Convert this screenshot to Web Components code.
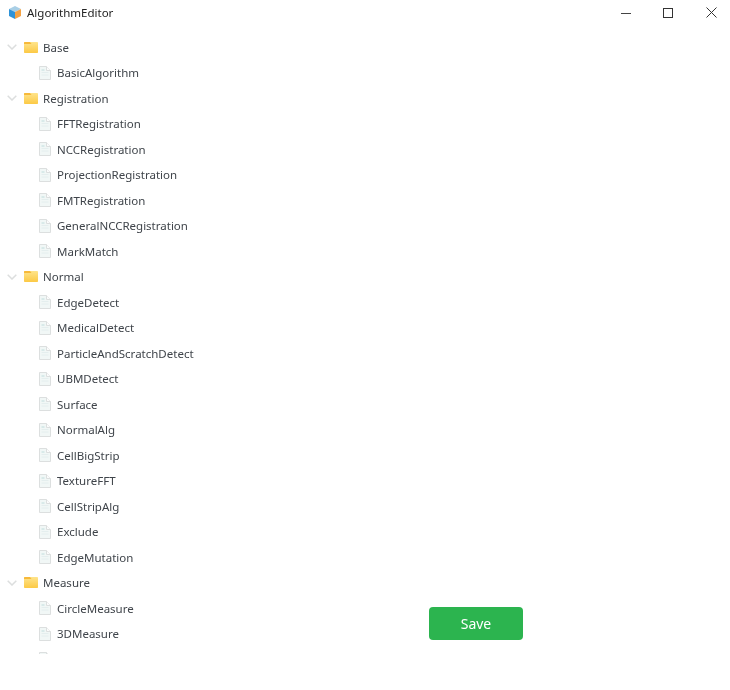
<!DOCTYPE html>
<html lang="en"><head><meta charset="utf-8"><title>AlgorithmEditor</title>
<style>
html,body{margin:0;padding:0;background:#fff;width:730px;height:690px;overflow:hidden}
body{font-family:"Noto Sans","Liberation Sans",sans-serif}
</style></head><body>
<app-window>
  <title-bar slot="title" caption="AlgorithmEditor"></title-bar>
  <tree-folder label="Base">
    <tree-file label="BasicAlgorithm"></tree-file>
  </tree-folder>
  <tree-folder label="Registration">
    <tree-file label="FFTRegistration"></tree-file>
    <tree-file label="NCCRegistration"></tree-file>
    <tree-file label="ProjectionRegistration"></tree-file>
    <tree-file label="FMTRegistration"></tree-file>
    <tree-file label="GeneralNCCRegistration"></tree-file>
    <tree-file label="MarkMatch"></tree-file>
  </tree-folder>
  <tree-folder label="Normal">
    <tree-file label="EdgeDetect"></tree-file>
    <tree-file label="MedicalDetect"></tree-file>
    <tree-file label="ParticleAndScratchDetect"></tree-file>
    <tree-file label="UBMDetect"></tree-file>
    <tree-file label="Surface"></tree-file>
    <tree-file label="NormalAlg"></tree-file>
    <tree-file label="CellBigStrip"></tree-file>
    <tree-file label="TextureFFT"></tree-file>
    <tree-file label="CellStripAlg"></tree-file>
    <tree-file label="Exclude"></tree-file>
    <tree-file label="EdgeMutation"></tree-file>
  </tree-folder>
  <tree-folder label="Measure">
    <tree-file label="CircleMeasure"></tree-file>
    <tree-file label="3DMeasure"></tree-file>
    <tree-file label=""></tree-file>
  </tree-folder>
  <save-button slot="action">Save</save-button>
</app-window>
<script>
const FILE_ICON = `<svg width="12" height="14" viewBox="0 0 12 14" aria-hidden="true"><path d="M.5.5h7l4 4v9H.5z" fill="#f1f7f6" stroke="#dcdfdf"/><path d="M7.500.5v4h4" fill="#fbfcfc" stroke="#dcdfdf"/><path d="M2.500 4h3" stroke="#c0dcdc"/><path d="M2.500 6.500h7M2.500 9h7" stroke="#e4eeee"/></svg>`;
let folderId = 0;
const folderIcon = () => { const id = 'fg' + (++folderId); return `<svg width="14" height="11" viewBox="0 0 14 11" aria-hidden="true"><defs><linearGradient id="${id}" x1="0" y1="0" x2="0" y2="1"><stop offset="0" stop-color="#fee48c"/><stop offset="1" stop-color="#fcc945"/></linearGradient></defs><rect width="14" height="11" rx=".8" fill="url(#${id})"/><path d="M0 .8C0 .3.300 0 .8 0H6l1.500 2H0z" fill="#f7b93a"/></svg>`; };
const CHEVRON = `<svg width="10" height="6" viewBox="0 0 10 6" aria-hidden="true"><path d="M.7.7 5 5 9.300.7" fill="none" stroke="#dcdede" stroke-width="1.500"/></svg>`;

customElements.define('app-window', class extends HTMLElement {
  constructor(){super();this.attachShadow({mode:'open'}).innerHTML=`<style>
    :host{display:grid;grid-template-rows:25px 629px 1fr;grid-template-columns:429px 94px 1fr;width:730px;height:690px;background:#fff;overflow:hidden;box-sizing:border-box;filter:blur(.35px)}
    .title{grid-column:1/-1;grid-row:1}
    .tree{grid-column:1/-1;grid-row:2;padding-top:9.5px;overflow:hidden;box-sizing:border-box}
    .action{grid-column:2;grid-row:2;align-self:end;z-index:1;height:33px;margin-bottom:14px}
  </style>
  <div class="title"><slot name="title"></slot></div>
  <div class="tree"><slot></slot></div>
  <div class="action"><slot name="action"></slot></div>`;}
});

customElements.define('title-bar', class extends HTMLElement {
  constructor(){super();const r=this.attachShadow({mode:'open'});r.innerHTML=`<style>
    :host{display:flex;align-items:center;height:25px;color:#222;font:11.5px/1 "Noto Sans","Liberation Sans",sans-serif}
    .logo{margin-left:9px;margin-right:6px;display:block}
    .cap{flex:1;position:relative;top:.5px}
    .btns{display:flex;align-items:center;padding-right:13px}
    .btns svg:nth-child(1){margin-right:32px}
    .btns svg:nth-child(2){margin-right:33px}
    svg{display:block}
  </style>
  <svg class="logo" width="12" height="13" viewBox="0 0 12 13" aria-hidden="true">
    <path d="M6 0 12 3 6 6 0 3z" fill="#a9cfe6"/>
    <path d="M0 3 6 6V13L0 10z" fill="#2f93d8"/>
    <path d="M12 3 6 6V13L12 10z" fill="#f5a243"/>
  </svg>
  <span class="cap"></span>
  <div class="btns">
    <svg width="10" height="10" viewBox="0 0 10 10"><path d="M0 5.500h10" stroke="#444" stroke-width="1"/></svg>
    <svg width="10" height="10" viewBox="0 0 10 10"><rect x=".5" y=".5" width="9" height="9" fill="none" stroke="#333"/></svg>
    <svg width="11" height="11" viewBox="0 0 11 11"><path d="M.5.5l10 10M10.500.5l-10 10" stroke="#333" fill="none"/></svg>
  </div>`;
  r.querySelector('.cap').textContent=this.getAttribute('caption');}
});

customElements.define('tree-folder', class extends HTMLElement {
  constructor(){super();const r=this.attachShadow({mode:'open'});r.innerHTML=`<style>
    :host{display:block;color:#3f444a;font:11.5px/25.5px "Noto Sans","Liberation Sans",sans-serif}
    .row{display:flex;align-items:center;height:25.5px}
    .chev{margin-left:7px;margin-right:7px;display:flex}
    .ic{display:flex;margin-right:5px}
  </style>
  <div class="row"><span class="chev">${CHEVRON}</span><span class="ic">${folderIcon()}</span><span class="t"></span></div>
  <slot></slot>`;
  r.querySelector('.t').textContent=this.getAttribute('label');}
});

customElements.define('tree-file', class extends HTMLElement {
  constructor(){super();const r=this.attachShadow({mode:'open'});r.innerHTML=`<style>
    :host{display:flex;align-items:center;height:25.5px;padding-left:39px;color:#3f444a;font:11.5px/25.5px "Noto Sans","Liberation Sans",sans-serif}
    .ic{display:flex;margin-right:6px}
  </style>
  <span class="ic">${FILE_ICON}</span><span class="t"></span>`;
  r.querySelector('.t').textContent=this.getAttribute('label');}
});

customElements.define('save-button', class extends HTMLElement {
  constructor(){super();this.attachShadow({mode:'open'}).innerHTML=`<style>
    :host{display:flex;align-items:center;justify-content:center;width:94px;height:33px;background:#2cb44f;color:#fff;border-radius:4px;font:14px/1 "Noto Sans","Liberation Sans",sans-serif}
  </style><slot></slot>`;}
});
</script>
</body></html>
